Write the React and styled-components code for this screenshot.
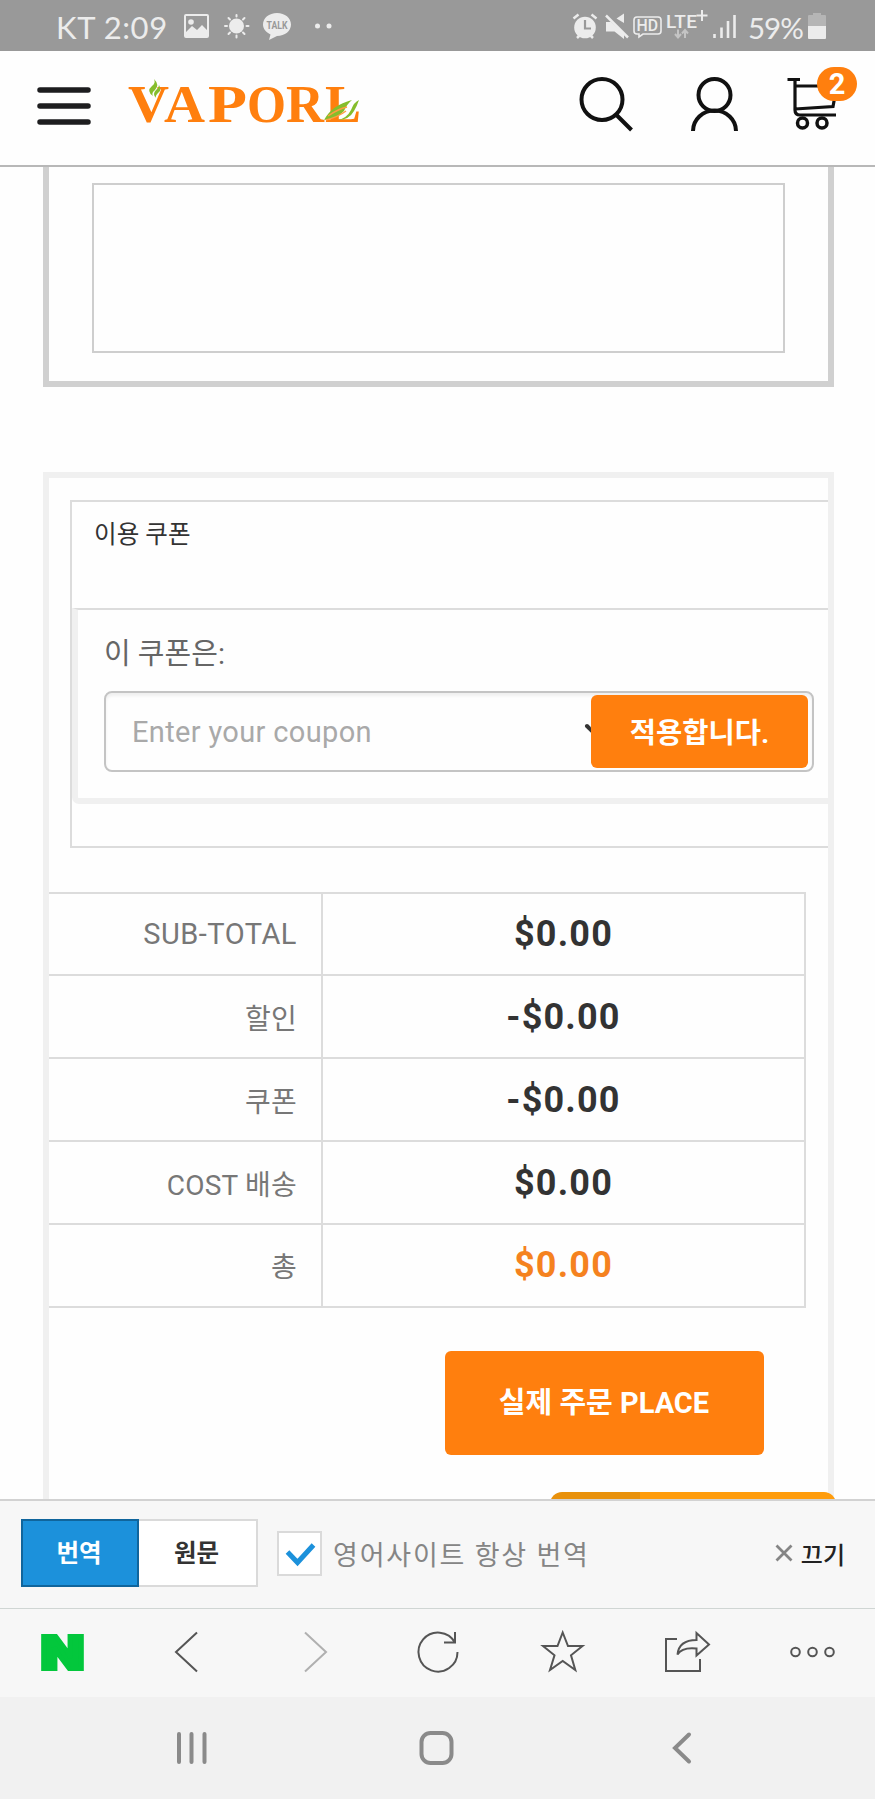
import React from 'react';
import styled, { createGlobalStyle } from 'styled-components';

const GlobalStyle = createGlobalStyle`
    * {
        box-sizing: border-box;
    }

    body {
        margin: 0;
        background: #fefefe;
        font-family: Roboto, "Noto Sans CJK KR", sans-serif;
    }

    svg {
        display: block;
        flex: none;
    }
`;

const Screen = styled.div`
    display: flex;
    flex-direction: column;
    width: 875px;
    height: 1799px;
    overflow: hidden;
    background: #fefefe;
`;

const StatusBar = styled.div`
    display: flex;
    justify-content: space-between;
    height: 51px;
    padding: 0 47px 0 56px;
    background: #999;
    color: #ececec;
`;

const StatusGroup = styled.div`
    display: flex;
    align-items: center;
`;

const StatusText = styled.span`
    width: ${props => props.$width}px;
    font-family: Lato, sans-serif;
    font-size: ${props => props.$size}px;
    line-height: 51px;
    letter-spacing: ${props => props.$spacing || 0}px;
    padding-top: 3px;
    white-space: nowrap;
`;

const Header = styled.header`
    display: flex;
    justify-content: space-between;
    height: 116px;
    border-bottom: 2px solid #b8b8b8;
`;

const HeaderSide = styled.div`
    display: flex;
`;

const Cart = styled.div`
    position: relative;
`;

const Badge = styled.span`
    position: absolute;
    left: 37px;
    top: 16px;
    width: 40px;
    height: 34px;
    border-radius: 17px;
    background: #ff7f0e;
    color: white;
    font-size: 29px;
    font-weight: 700;
    line-height: 35px;
    text-align: center;
`;

const Content = styled.main`
    display: flex;
    flex-direction: column;
    height: 1332px;
    padding: 0 41px 0 43px;
    position: relative;
`;

const CommentBox = styled.section`
    height: 220px;
    padding: 16px 43px 28px;
    border: 6px solid #d0d0d0;
    border-top: none;
`;

const CommentField = styled.div`
    height: 170px;
    border: 2px solid #cecece;
`;

const Summary = styled.section`
    flex: 1;
    margin-top: 85px;
    border: 6px solid #f0f0f0;
    border-bottom: none;
    overflow: hidden;
`;

const CouponBox = styled.div`
    width: 790px;
    height: 348px;
    margin: 22px 0 0 21px;
    border: 2px solid #dcdcdc;
`;

const CouponTitle = styled.h3`
    height: 106px;
    margin: 0;
    padding: 15px 0 0 22px;
    color: #333;
    font-size: 24.6px;
    font-weight: 400;
    line-height: 36px;
`;

const CouponPanel = styled.div`
    height: 196px;
    padding: 24px 0 0 26px;
    border-top: 2px solid #dcdcdc;
    border-left: 6px solid #f0f0f0;
    border-bottom: 6px solid #f0f0f0;
    border-bottom-left-radius: 7px;
`;

const CouponLabel = styled.p`
    height: 57px;
    margin: 0;
    color: #666;
    font-size: 29px;
    line-height: 40px;
`;

const CouponInput = styled.div`
    display: flex;
    align-items: center;
    width: 710px;
    height: 81px;
    padding: 0 4px 0 26px;
    border: 2px solid #c4c4c4;
    border-radius: 8px;
    box-shadow: inset 0 3px 3px #f0f0f0;
`;

const Placeholder = styled.span`
    flex: 1;
    color: #a9a9a9;
    font-size: 29px;
    letter-spacing: 0.35px;
`;

const ApplyBtn = styled.button`
    width: 217px;
    height: 73px;
    padding: 0 0 2px;
    border: none;
    border-radius: 6px;
    background: #ff7f0e;
    color: white;
    font-family: inherit;
    font-size: 28.5px;
    font-weight: 700;
`;

const Totals = styled.div`
    width: 757px;
    margin-top: 43.6px;
    border-right: 2px solid #dcdcdc;
    border-bottom: 2px solid #dcdcdc;
`;

const TotalRow = styled.div`
    display: grid;
    grid-template-columns: 272px 1fr;
    height: 82.87px;
    border-top: 2px solid #dcdcdc;
`;

const TotalLabel = styled.div`
    display: flex;
    align-items: center;
    justify-content: flex-end;
    padding: 0 24px 0 0;
    color: #777;
    font-size: ${props => props.$latin ? 29 : 28}px;
    letter-spacing: ${props => props.$latin ? 0.5 : 0.2}px;
`;

const TotalValue = styled.div`
    display: flex;
    align-items: center;
    justify-content: center;
    border-left: 2px solid #dcdcdc;
    color: ${props => props.$highlight ? '#f5821f' : '#333'};
    font-size: 36px;
    font-weight: 700;
    letter-spacing: 1.2px;
`;

const PlaceOrderBtn = styled.button`
    display: block;
    width: 319px;
    height: 104px;
    margin: 43px 0 0 395.5px;
    padding: 0 0 6px;
    border: none;
    border-radius: 6px;
    background: #ff7f0e;
    color: white;
    font-family: inherit;
    font-size: 29px;
    font-weight: 700;
`;

const ChatClip = styled.div`
    position: absolute;
    left: 550px;
    bottom: 0;
    width: 286px;
    height: 7px;
    overflow: hidden;
`;

const ChatButton = styled.div`
    height: 50px;
    border-radius: 12px;
    background: linear-gradient(to right, #e8910c 90px, #ff9c0c 90px);
`;

const TranslateBar = styled.div`
    display: flex;
    align-items: center;
    height: 110px;
    padding: 0 30px 3px 21px;
    border-top: 2px solid #d2d2d2;
    border-bottom: 1px solid #d0d6d4;
    background: #f7f7f7;
`;

const ToggleBtn = styled.button`
    width: ${props => props.$active ? 118 : 119}px;
    height: 68px;
    padding: 0 2px 3px 0;
    border: 2px solid ${props => props.$active ? '#10659c' : '#dadada'};
    border-left-width: ${props => props.$active ? 2 : 0}px;
    background: ${props => props.$active ? '#1c91db' : 'white'};
    color: ${props => props.$active ? 'white' : '#333'};
    font-family: inherit;
    font-size: 24.5px;
    font-weight: 700;
`;

const Checkbox = styled.div`
    width: 45px;
    height: 45px;
    margin-left: 19px;
    border: 2px solid #dadada;
    background: white;
`;

const AlwaysText = styled.span`
    flex: 1;
    margin-left: 11px;
    color: #858585;
    font-size: 27px;
    letter-spacing: 1.8px;
    white-space: nowrap;
`;

const CloseText = styled.span`
    margin-left: 8px;
    color: #222;
    font-size: 24px;
    font-weight: 500;
    white-space: nowrap;
`;

const Toolbar = styled.nav`
    display: grid;
    grid-template-columns: repeat(7, 125px);
    height: 88px;
    background: #f7f7f7;
`;

const NavBar = styled.nav`
    display: grid;
    grid-template-columns: repeat(3, 245px);
    height: 102px;
    padding-left: 68.5px;
    background: #f1f1f1;
`;

const totals = [
    { label: 'SUB-TOTAL', value: '$0.00', latin: true },
    { label: '할인', value: '-$0.00' },
    { label: '쿠폰', value: '-$0.00' },
    { label: 'COST 배송', value: '$0.00' },
    { label: '총', value: '$0.00', highlight: true },
];

// x position and drawn width of each letter
const logoLetters = [
    { char: 'V', x: 0, width: 41 },
    { char: 'A', x: 36, width: 41 },
    { char: 'P', x: 80, width: 39 },
    { char: 'O', x: 119, width: 39 },
    { char: 'R', x: 158, width: 38 },
    { char: 'L', x: 197, width: 36 },
];

const NotificationIcons = () => (
    <svg width="155" height="51" fill="#ececec">
        <path fillRule="evenodd" d="M8 14h21a2 2 0 0 1 2 2v20a2 2 0 0 1-2 2H8a2 2 0 0 1-2-2V16a2 2 0 0 1 2-2zM8 16v16l6-6 5 4 5-5 5 5V16z" />
        <circle cx="13" cy="22" r="2.800" />
        <circle cx="58.500" cy="26" r="7.500" />
        <path d="M58.500 15v1.500M58.500 35.500v2M47 26h2M68.500 26h2M50.500 18l1.500 1.500M65 32.500l1.500 1.500M66.500 18l-1.500 1.500M52 32.500l-1.500 1.500" stroke="#ececec" strokeWidth="2" strokeLinecap="round" />
        <path d="M99 13c8 0 14 5 14 11.500S107 36 99 36l-8 4 1.500-5.500C88 32 85 29 85 24.500 85 18 91 13 99 13z" />
        <text x="88.500" y="28.500" fill="#999" fontSize="10.500" fontWeight="700" fontFamily="Roboto" textLength="21" lengthAdjust="spacingAndGlyphs">TALK</text>
        <circle cx="139.500" cy="26" r="2.500" />
        <circle cx="151" cy="26" r="2.500" />
    </svg>
);

const SystemIcons = () => (
    <svg width="178" height="51" fill="#ececec">
        {/* alarm */}
        <circle cx="15" cy="27.500" r="10.800" />
        <path d="M3.500 18.500l5-4M26.500 18.500l-5-4M7 38l3-3M23 38l-3-3" stroke="#ececec" strokeWidth="2.500" />
        <path d="M15 20v8.500h6" fill="none" stroke="#999" strokeWidth="2.200" />
        {/* muted speaker */}
        <path d="M36 22h5l5 4.500 8 7V39l-9.500-7.500H36zM46.500 18.500l7.500-5V23z" />
        <path d="M36 15.500l22 22" stroke="#ececec" strokeWidth="2.500" />
        {/* HD voice */}
        <path d="M67 17h21q3 0 3 3v11q0 3-3 3H73l-4 3v-3h-2q-3 0-3-3V20q0-3 3-3z" fill="none" stroke="#ececec" strokeWidth="1.600" />
        <text x="66.500" y="31" fontSize="16" fontWeight="500" fontFamily="Roboto" textLength="21.500" lengthAdjust="spacingAndGlyphs">HD</text>
        <text x="96" y="27.500" fontSize="19" fontWeight="500" fontFamily="Roboto" textLength="31">LTE</text>
        <path d="M132 10v11M126.500 15.500h11" stroke="#ececec" strokeWidth="2" />
        <path d="M108 29.500v8M105 34l3 3.500 3-3.500M115 38v-8M112 33.500l3-3.500 3 3.500" fill="none" stroke="#c4c4c4" strokeWidth="2" />
        <path d="M144.500 34v4M151.500 27.500V38M158 21v17M164.500 15v23" stroke="#ececec" strokeWidth="2.600" />
    </svg>
);

const BatteryIcon = () => (
    <svg width="20" height="51">
        <path d="M5 13h8v2h4q1 0 1 1v10H0V16q0-1 1-1h4z" fill="#b5b5b5" />
        <path d="M0 26h18v12q0 1-1 1H1q-1 0-1-1z" fill="#ececec" />
    </svg>
);

const MenuIcon = () => (
    <svg width="128" height="114" stroke="#1d1d1f" strokeWidth="5.500" strokeLinecap="round">
        <path d="M40 39h48M40 55h48M40 71h48" />
    </svg>
);

const Logo = () => (
    <svg width="240" height="114">
        {logoLetters.map(letter => (
            <text
                key={letter.char}
                x={letter.x}
                y="71"
                fill="#ff7f0e"
                fontFamily="Liberation Serif"
                fontWeight="700"
                fontSize="53"
                textLength={letter.width}
                lengthAdjust="spacingAndGlyphs"
            >
                {letter.char}
            </text>
        ))}
        <g fill="#85bd2c">
            <path d="M26 28q6 6 1 11-4 3-2 6-7-5-1-10 4-3 2-7zM31 34q3 5-1 8-3 3-2 5-4-4 0-8 3-2 3-5z" />
            <path d="M196 69q8-15 28-20-5 4-8 11-7 8-20 9z" />
            <path d="M210 69q9-2 13-10 3-8 8-10-2 6-5 11-5 9-16 9z" />
        </g>
        <path d="M200 65q10-7 19-9M198 69q12-3 20-9" fill="none" stroke="#ff9d42" strokeWidth="1.500" />
    </svg>
);

const SearchIcon = () => (
    <svg width="89" height="114" fill="none" stroke="#111" strokeWidth="4">
        <circle cx="31" cy="48.500" r="20.500" />
        <path d="M45 63.500l15.500 15.500" />
    </svg>
);

const UserIcon = () => (
    <svg width="120" height="114" fill="none" stroke="#111" strokeWidth="4">
        <circle cx="54.500" cy="44" r="16" />
        <path d="M33 80a21.500 20.500 0 0 1 43 0" />
    </svg>
);

const CartIcon = () => (
    <svg width="95" height="114" fill="none" stroke="#111" strokeWidth="3.200">
        <path d="M7.500 28.500H20M15 29v30q0 5 5 5h36M15 35h30M15 58l38-2.500 1.500-8" />
        <circle cx="22.500" cy="72" r="5" strokeWidth="3.500" />
        <circle cx="42" cy="72" r="5" strokeWidth="3.500" />
    </svg>
);

const App = () => {
    return (
        <>
            <GlobalStyle />
            <Screen>
                <StatusBar>
                    <StatusGroup>
                        <StatusText $width={122} $size={31} $spacing={0.6}>KT 2:09</StatusText>
                        <NotificationIcons />
                    </StatusGroup>
                    <StatusGroup>
                        <SystemIcons />
                        <StatusText $width={60} $size={29.5} $spacing={-1}>59%</StatusText>
                        <BatteryIcon />
                    </StatusGroup>
                </StatusBar>

                <Header>
                    <HeaderSide>
                        <MenuIcon />
                        <Logo />
                    </HeaderSide>
                    <HeaderSide>
                        <SearchIcon />
                        <UserIcon />
                        <Cart>
                            <CartIcon />
                            <Badge>2</Badge>
                        </Cart>
                    </HeaderSide>
                </Header>

                <Content>
                    <CommentBox>
                        <CommentField />
                    </CommentBox>
                    <Summary>
                        <CouponBox>
                            <CouponTitle>이용 쿠폰</CouponTitle>
                            <CouponPanel>
                                <CouponLabel>이 쿠폰은:</CouponLabel>
                                <CouponInput>
                                    <Placeholder>Enter your coupon</Placeholder>
                                    {/* tip of the dropdown arrow, the rest is under the button */}
                                    <svg width="7" height="20">
                                        <path d="M3 4l8 8" stroke="#333" strokeWidth="4" strokeLinecap="round" />
                                    </svg>
                                    <ApplyBtn type='button'>적용합니다.</ApplyBtn>
                                </CouponInput>
                            </CouponPanel>
                        </CouponBox>
                        <Totals>
                            {totals.map(row => (
                                <TotalRow key={row.label}>
                                    <TotalLabel $latin={row.latin}>{row.label}</TotalLabel>
                                    <TotalValue $highlight={row.highlight}>{row.value}</TotalValue>
                                </TotalRow>
                            ))}
                        </Totals>
                        <PlaceOrderBtn type='button'>실제 주문 PLACE</PlaceOrderBtn>
                    </Summary>
                    <ChatClip>
                        <ChatButton />
                    </ChatClip>
                </Content>

                <TranslateBar>
                    <ToggleBtn type='button' $active>번역</ToggleBtn>
                    <ToggleBtn type='button'>원문</ToggleBtn>
                    <Checkbox>
                        <svg width="41" height="41" fill="none" stroke="#1c91db" strokeWidth="5">
                            <path d="M8.500 19l10 10.500L34.500 12" />
                        </svg>
                    </Checkbox>
                    <AlwaysText>영어사이트 항상 번역</AlwaysText>
                    <svg width="18" height="18" stroke="#858585" strokeWidth="2.800">
                        <path d="M1.500 1.500l15 15M16.500 1.500l-15 15" />
                    </svg>
                    <CloseText>끄기</CloseText>
                </TranslateBar>

                <Toolbar>
                    <svg width="125" height="88">
                        <text x="41" y="60" fill="#03c73c" stroke="#03c73c" strokeWidth="4" fontFamily="Inter" fontSize="46" fontWeight="900" textLength="43" lengthAdjust="spacingAndGlyphs">N</text>
                    </svg>
                    <svg width="125" height="88" fill="none" stroke="#555" strokeWidth="2">
                        <path d="M72 23.500L51 43l21 19.500" />
                    </svg>
                    <svg width="125" height="88" fill="none" stroke="#b0b0b0" strokeWidth="2">
                        <path d="M55 23.500L76 43 55 62.500" />
                    </svg>
                    <svg width="125" height="88" fill="none" stroke="#555" strokeWidth="2">
                        <path d="M82.500 43A19.500 19.500 0 1 1 80 33.500M80 23v10.500H69" />
                    </svg>
                    <svg width="125" height="88" fill="none" stroke="#555" strokeWidth="2">
                        <path d="M62.700 23.500L68 37h14.500L71 46.300l4.300 14.700-12.600-9-12.700 9 4.500-14.700L43 37h14.500z" />
                    </svg>
                    <svg width="125" height="88" fill="none" stroke="#555" strokeWidth="2">
                        <path d="M52 30H41v32h34V50" />
                        <path d="M52.500 45.500Q54 31 71.500 31v-7L84 35.500 71.500 46.500v-7Q57 38 52.500 45.500z" />
                    </svg>
                    <svg width="125" height="88" fill="none" stroke="#555" strokeWidth="2">
                        <circle cx="45.500" cy="43" r="4.300" />
                        <circle cx="62.500" cy="43" r="4.300" />
                        <circle cx="79.500" cy="43" r="4.300" />
                    </svg>
                </Toolbar>

                <NavBar>
                    <svg width="245" height="102" stroke="#8a8a8a" strokeWidth="4" strokeLinecap="round">
                        <path d="M110 37v28M122.500 37v28M135.500 37v28" />
                    </svg>
                    <svg width="245" height="102" fill="none" stroke="#8a8a8a" strokeWidth="4">
                        <rect x="107.500" y="36" width="30" height="30" rx="9" />
                    </svg>
                    <svg width="245" height="102" fill="none" stroke="#8a8a8a" strokeWidth="4" strokeLinecap="round">
                        <path d="M130 37.500L116 51l14 13.500" />
                    </svg>
                </NavBar>
            </Screen>
        </>
    );
}

export default App
